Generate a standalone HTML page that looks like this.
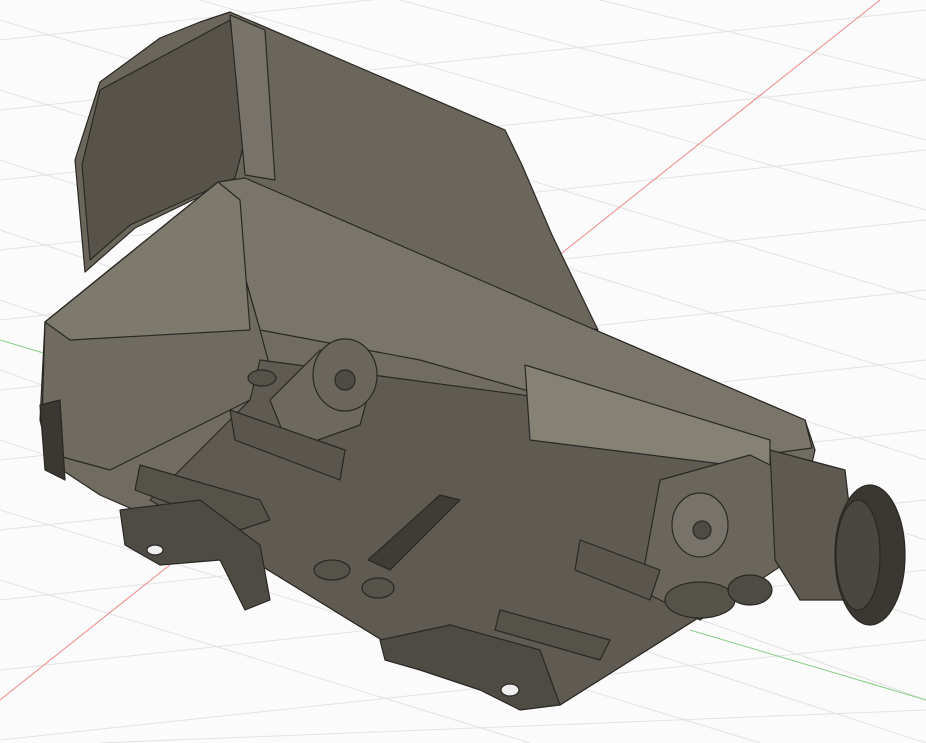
<!DOCTYPE html>
<html><head><meta charset="utf-8"><style>
html,body{margin:0;padding:0;background:#fff;width:926px;height:743px;overflow:hidden;}
svg{display:block;position:absolute;left:0;top:0;overflow:hidden;}
</style></head><body>
<svg width="926" height="743" viewBox="0 0 926 743" xmlns="http://www.w3.org/2000/svg">
<defs><clipPath id="c"><rect width="926" height="743"/></clipPath></defs>
<g clip-path="url(#c)">
<rect width="926" height="743" fill="#fbfbfb"/>
<g stroke="#e2e2e2" stroke-width="1" fill="none">
<path d="M0,40 L926,-60 M0,110 L926,10 M0,180 L926,80 M0,250 L926,150 M0,320 L926,220 M0,390 L926,290 M0,460 L926,360 M0,530 L926,430 M0,600 L926,500 M0,670 L926,570 M0,740 L926,640 M100,743 L926,710"/>
<path d="M0,20 L926,300 M0,90 L926,380 M0,160 L926,460 M0,230 L926,540 M0,300 L926,620 M0,370 L926,700 M0,440 L926,743 M0,510 L760,743 M0,580 L530,743 M200,0 L926,210 M400,0 L926,140 M600,0 L926,80"/>
</g>
<line x1="880" y1="0" x2="0" y2="700" stroke="#e88" stroke-width="1"/>
<line x1="0" y1="340" x2="60" y2="358" stroke="#8c8" stroke-width="1"/>
<line x1="690" y1="630" x2="926" y2="700" stroke="#8c8" stroke-width="1"/>
<g stroke="#2a2824" stroke-width="1.2" stroke-linejoin="round">
<path d="M230,12 L505,130 L522,165 L552,235 L598,330 L470,300 L260,190 L230,182 L135,228 L85,272 L75,160 L100,82 L160,38 L200,22 Z" fill="#6a665c"/>
<path d="M100,90 L230,20 L245,140 L235,178 L130,225 L90,260 L82,165 Z" fill="#57534b"/>
<path d="M230,15 L265,30 L275,180 L245,175 Z" fill="#77736a"/>
<path d="M45,322 L218,182 L600,332 L805,420 L815,450 L790,560 L560,705 L390,645 L260,565 L100,495 L50,462 L40,420 Z" fill="#716c61"/>
<path d="M218,182 L245,178 L600,332 L805,420 L812,448 L760,455 L560,400 L420,360 L260,330 Z" fill="#7a756a"/>
<path d="M45,322 L218,182 L260,330 L268,360 L250,400 L110,470 L55,455 L42,420 Z" fill="#6f6b61"/>
<path d="M45,322 L218,182 L240,200 L250,330 L70,340 Z" fill="#7e796d"/>
<path d="M260,360 L560,400 L760,455 L790,560 L560,705 L390,645 L260,565 L150,500 L250,400 Z" fill="#5f5b52"/>
<path d="M368,560 L440,495 L460,500 L390,570 Z" fill="#3f3c36"/>
<ellipse cx="332" cy="570" rx="18" ry="10" fill="#55524a"/>
<ellipse cx="378" cy="588" rx="16" ry="10" fill="#55524a"/>
<ellipse cx="262" cy="378" rx="14" ry="8" fill="#55524a"/>
<path d="M525,365 L770,440 L770,470 L530,440 Z" fill="#868175"/>
<path d="M270,400 L320,350 L375,370 L360,425 L290,450 Z" fill="#6e695f"/>
<ellipse cx="345" cy="375" rx="32" ry="36" fill="#6a665c"/>
<ellipse cx="345" cy="380" rx="10" ry="10" fill="#4e4b44"/>
<path d="M660,480 L750,455 L780,470 L790,560 L700,620 L640,590 Z" fill="#6a665c"/>
<ellipse cx="700" cy="525" rx="28" ry="32" fill="#77726a"/>
<ellipse cx="702" cy="530" rx="9" ry="9" fill="#4e4b44"/>
<ellipse cx="700" cy="600" rx="35" ry="18" fill="#55524a"/>
<ellipse cx="750" cy="590" rx="22" ry="15" fill="#4e4b44"/>
<path d="M770,450 L845,470 L860,600 L800,600 L775,560 Z" fill="#5e5a51"/>
<ellipse cx="870" cy="555" rx="35" ry="70" fill="#3b3833"/>
<ellipse cx="858" cy="555" rx="22" ry="55" fill="#4a4740"/>
<path d="M140,465 L260,500 L270,520 L240,530 L135,490 Z" fill="#55524a"/>
<path d="M230,410 L345,450 L340,480 L235,440 Z" fill="#5a564e"/>
<path d="M500,610 L610,640 L600,660 L495,630 Z" fill="#55524a"/>
<path d="M580,540 L660,570 L650,600 L575,570 Z" fill="#5a564e"/>
<path d="M120,510 L200,500 L260,545 L270,600 L245,610 L220,560 L160,565 L125,545 Z" fill="#4e4b44"/>
<ellipse cx="155" cy="550" rx="8" ry="5" fill="#eee"/>
<path d="M380,640 L450,625 L540,650 L560,705 L520,710 L480,690 L420,670 L385,660 Z" fill="#4e4b44"/>
<ellipse cx="510" cy="690" rx="9" ry="6" fill="#eee"/>
<path d="M40,405 L60,400 L65,480 L45,470 Z" fill="#3b3833"/>
</g>
</g>
</svg>
</body></html>
